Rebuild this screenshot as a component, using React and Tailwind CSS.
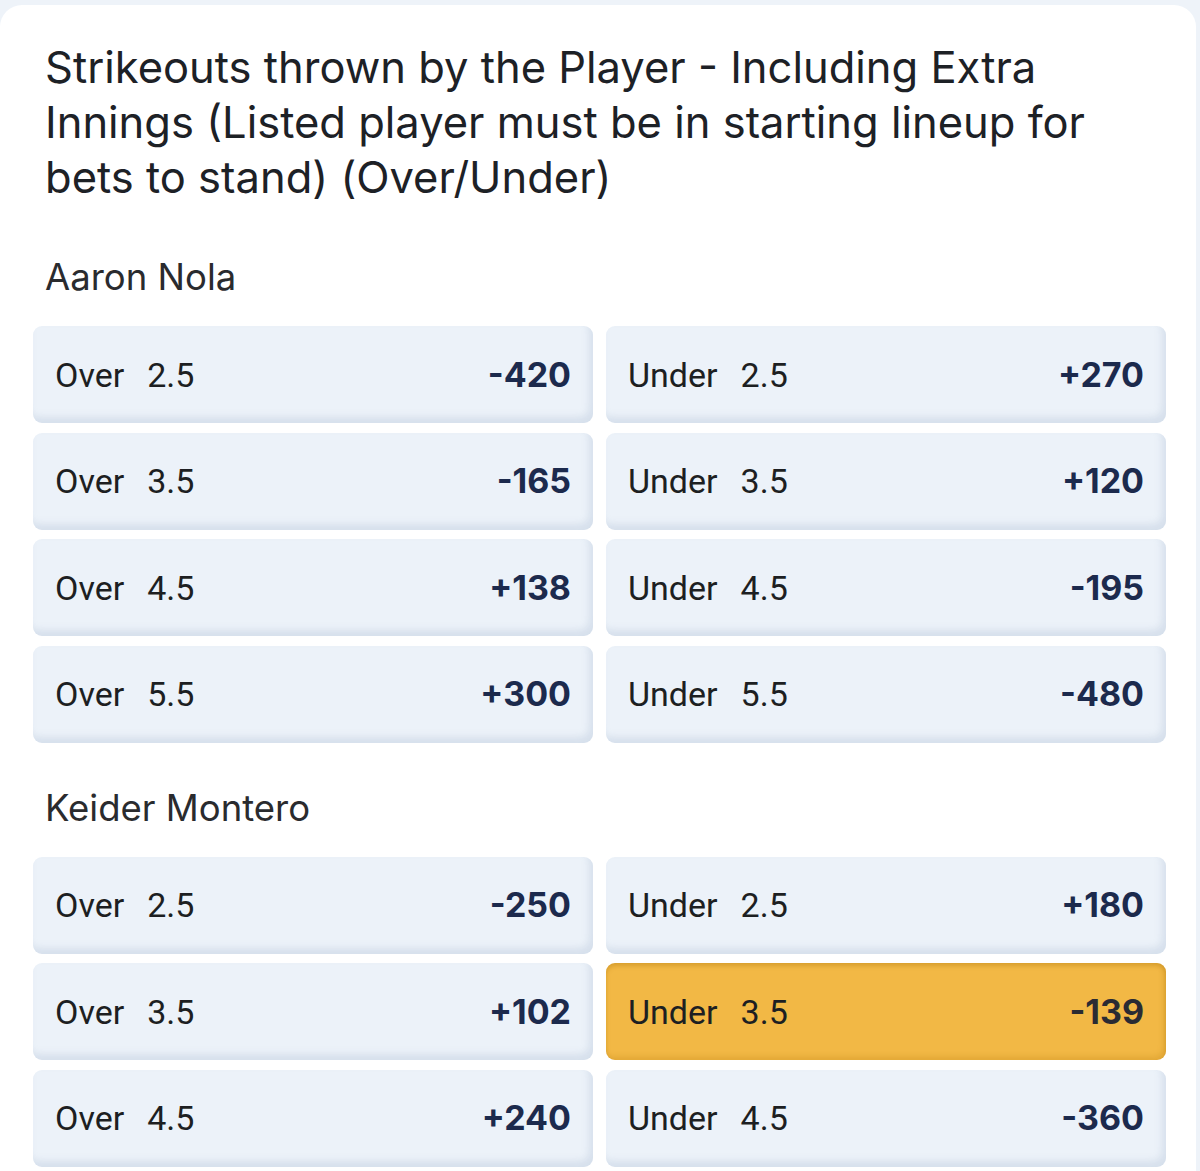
import React from "react";

const groups = [
    {
        player: "Aaron Nola",
        lines: [
            { line: "2.5", over: "-420", under: "+270" },
            { line: "3.5", over: "-165", under: "+120" },
            { line: "4.5", over: "+138", under: "-195" },
            { line: "5.5", over: "+300", under: "-480" },
        ],
    },
    {
        player: "Keider Montero",
        lines: [
            { line: "2.5", over: "-250", under: "+180" },
            { line: "3.5", over: "+102", under: "-139", picked: "under" },
            { line: "4.5", over: "+240", under: "-360" },
        ],
    },
];

function OddsButton({ label, line, odds, active }) {
    return (
        <div
            className={`h-[97px] rounded-[9px] flex items-center justify-between pl-[22px] pr-[22px] ${
                active
                    ? "bg-[#f2b845] shadow-[inset_0_3px_4px_rgba(170,115,10,0.35),inset_-3px_-4px_5px_rgba(190,130,20,0.25)]"
                    : "bg-[#ecf2f9] shadow-[inset_-4px_-6px_7px_rgba(150,170,200,0.25)]"
            }`}
        >
            <div className="flex items-center gap-[23px] font-['Roboto',sans-serif] text-[34px] text-[#1d1f22] leading-none">
                <span>{label}</span>
                <span>{line}</span>
            </div>
            <span
                className={`font-['Inter',sans-serif] font-bold text-[34px] leading-none ${
                    active ? "text-[#2a2b33]" : "text-[#1c2a4d]"
                }`}
            >
                {odds}
            </span>
        </div>
    );
}

export default function App() {
    return (
        <div className="w-[1200px] h-[1171px] overflow-hidden bg-[#eef3f9] pt-[5px]">
            <div className="bg-white rounded-t-[22px] w-[1196px] h-full px-[33px] pt-[35px]">
                <h1 className="ml-[12px] font-['Inter',sans-serif] text-[43.5px] leading-[55px] text-[#1d2126] pr-[20px]">
                    Strikeouts thrown by the Player - Including Extra Innings (Listed player must be in starting lineup for bets to stand) (Over/Under)
                </h1>

                {groups.map((g, gi) => (
                    <div key={g.player} className={gi === 0 ? "mt-[52px]" : "mt-[45px]"}>
                        <h2 className="ml-[12px] font-['Inter',sans-serif] text-[36.5px] leading-[40px] text-[#2a2b2e]">
                            {g.player}
                        </h2>
                        <div className="mt-[29px] grid grid-cols-2 gap-x-[13px] gap-y-[9.5px] w-[1133px]">
                            {g.lines.map((r) => (
                                <React.Fragment key={r.line}>
                                    <OddsButton label="Over" line={r.line} odds={r.over} active={r.picked === "over"} />
                                    <OddsButton label="Under" line={r.line} odds={r.under} active={r.picked === "under"} />
                                </React.Fragment>
                            ))}
                        </div>
                    </div>
                ))}
            </div>
        </div>
    );
}
